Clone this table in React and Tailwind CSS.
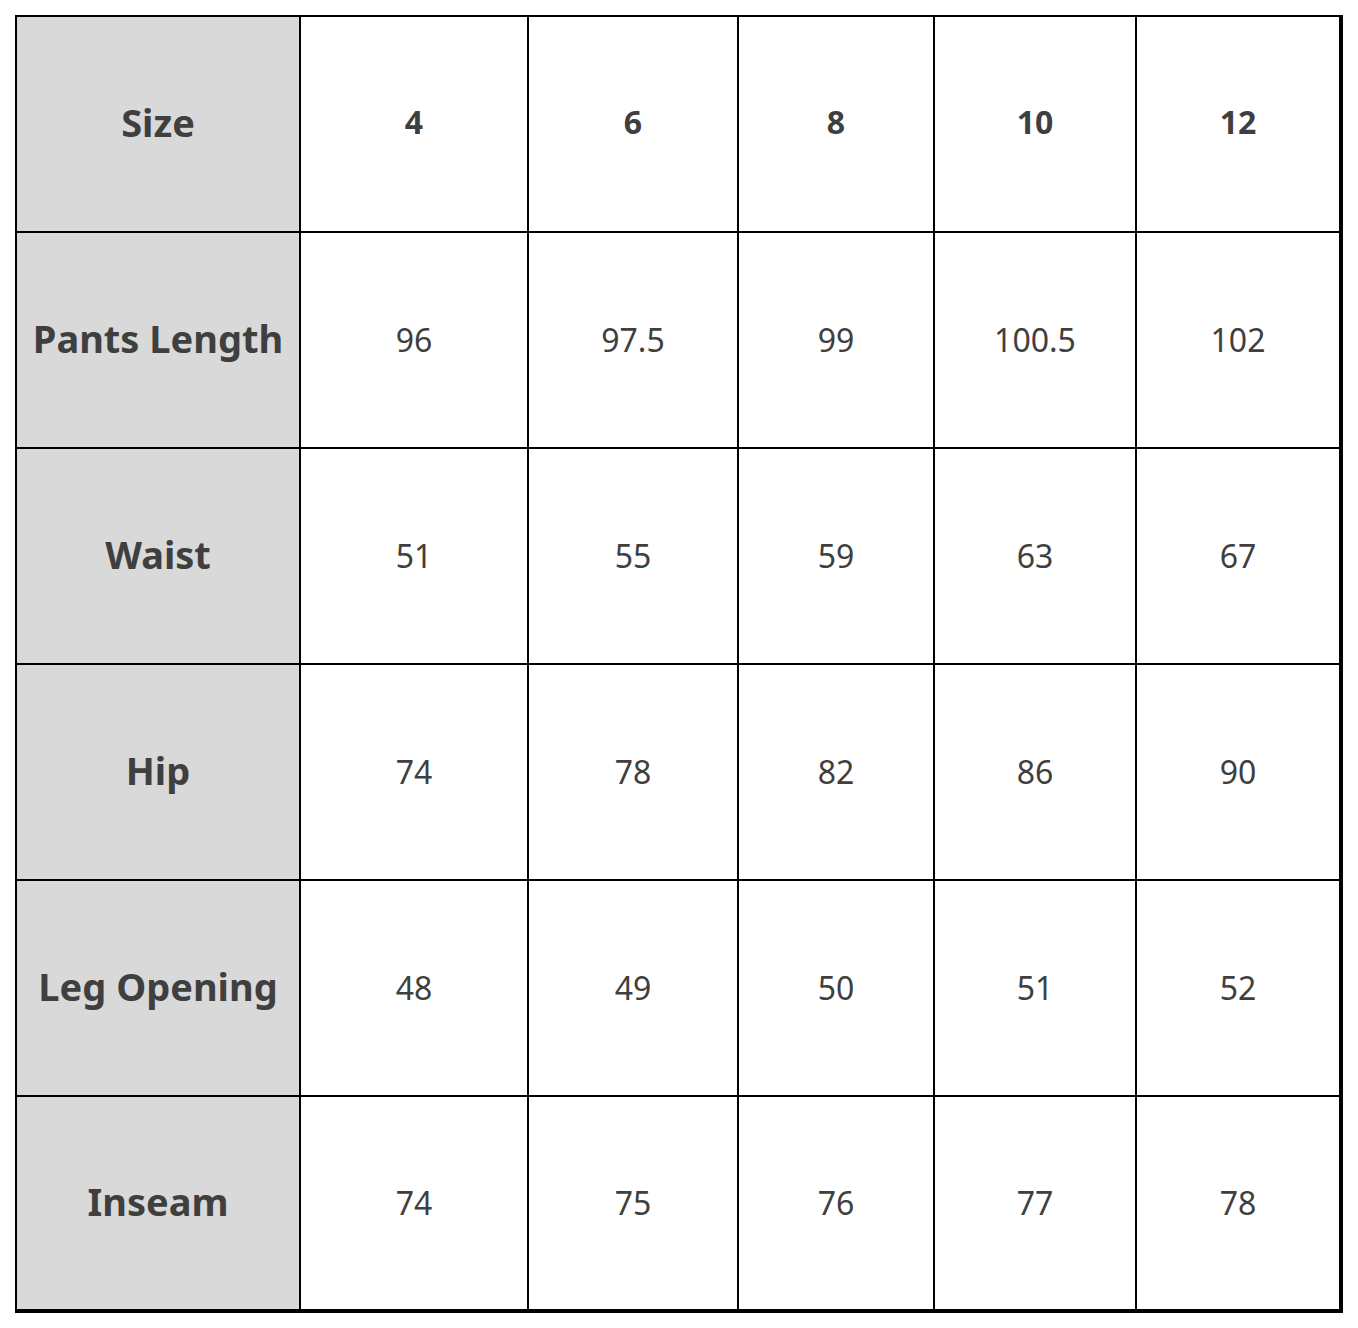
export default function App() {
  const header = ["Size", "4", "6", "8", "10", "12"];
  const rows = [
    ["Pants Length", "96", "97.5", "99", "100.5", "102"],
    ["Waist", "51", "55", "59", "63", "67"],
    ["Hip", "74", "78", "82", "86", "90"],
    ["Leg Opening", "48", "49", "50", "51", "52"],
    ["Inseam", "74", "75", "76", "77", "78"],
  ];
  return (
    <div className="w-[1358px] h-[1328px] bg-white pl-[15px] pt-[15px]" style={{ fontFamily: '"Noto Sans", sans-serif' }}>
      <div className="grid w-[1328px] grid-cols-[282px_226px_208px_194px_200px_202px] grid-rows-[214px_214px_214px_214px_214px_212px] gap-[2px] bg-black border-l-2 border-t-2 border-r-4 border-b-4 border-black text-[#3f3f3f] text-[32px]">
        {header.map((h, i) => (
          <div key={h} className={`flex items-center justify-center font-bold pb-[4px] ${i === 0 ? "bg-[#d9d9d9] text-[38px]" : "bg-white"}`}>
            {h}
          </div>
        ))}
        {rows.map((r) =>
          r.map((c, i) => (
            <div key={r[0] + i} className={`flex items-center justify-center whitespace-nowrap ${i === 0 ? "bg-[#d9d9d9] font-bold text-[38px] pb-[4px]" : "bg-white"}`}>
              {c}
            </div>
          ))
        )}
      </div>
    </div>
  );
}
